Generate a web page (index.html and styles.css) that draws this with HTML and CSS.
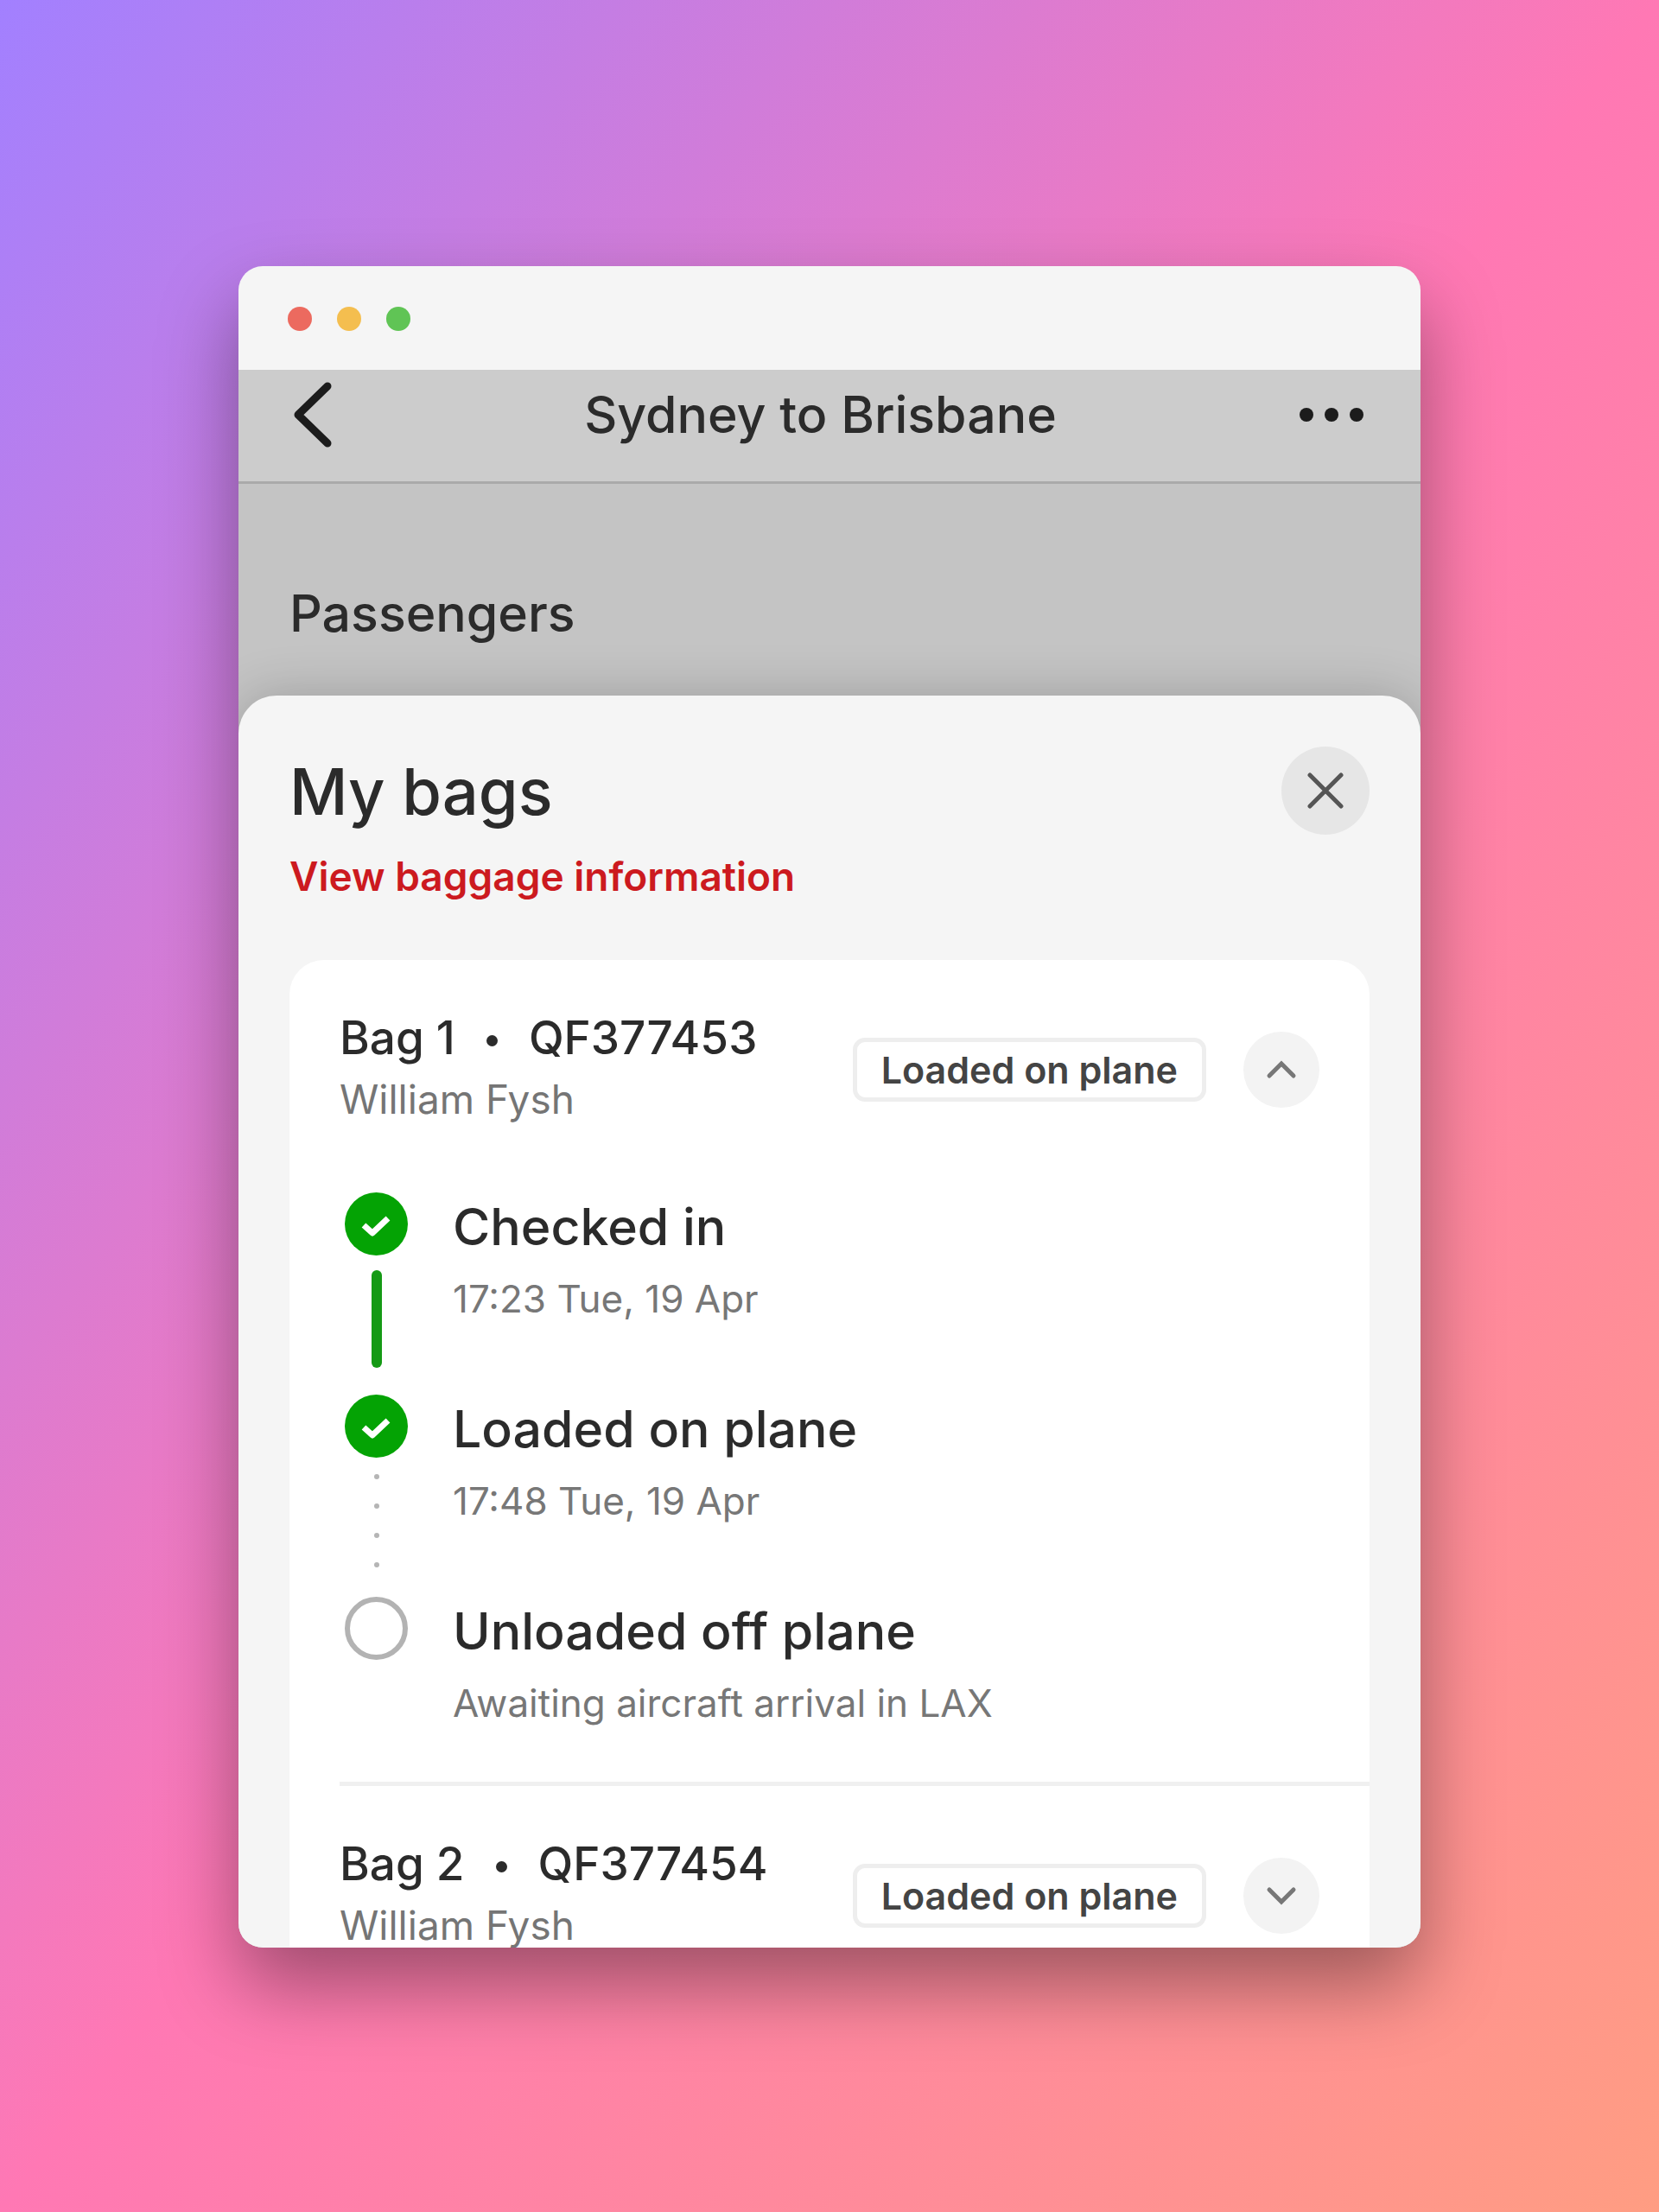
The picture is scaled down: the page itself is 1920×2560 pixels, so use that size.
FILE: index.html
```html
<!DOCTYPE html>
<html lang="en">
<head>
<meta charset="utf-8">
<meta name="viewport" content="width=device-width, initial-scale=1">
<title>My bags</title>
<link rel="stylesheet" href="styles.css">
</head>
<body>
<main class="window">
  <div class="titlebar">
    <span class="light light-red"></span>
    <span class="light light-yellow"></span>
    <span class="light light-green"></span>
  </div>
  <div class="screen">
    <header class="nav">
      <button class="nav-back" type="button" aria-label="Back">
        <svg width="60" height="80" viewBox="0 0 60 80" fill="none" stroke="#1c1c1c" stroke-width="9" stroke-linecap="round" stroke-linejoin="round"><path d="M44 7 10 40l34 33"/></svg>
      </button>
      <h1 class="nav-title">Sydney to Brisbane</h1>
      <button class="nav-more" type="button" aria-label="More">
        <svg width="74" height="16" viewBox="0 0 74 16" fill="#1c1c1c"><circle cx="8" cy="8" r="8"/><circle cx="37" cy="8" r="8"/><circle cx="66" cy="8" r="8"/></svg>
      </button>
    </header>
    <section class="passengers">
      <h2 class="section-title">Passengers</h2>
    </section>
    <section class="sheet">
      <div class="sheet-head">
        <div class="sheet-heading">
          <h2 class="sheet-title">My bags</h2>
          <a class="sheet-link" href="#">View baggage information</a>
        </div>
        <button class="round close" type="button" aria-label="Close">
          <svg width="44" height="44" viewBox="0 0 44 44" fill="none" stroke="#555" stroke-width="5" stroke-linecap="round"><path d="M4 4l36 36M40 4 4 40"/></svg>
        </button>
      </div>
      <div class="card">
        <article class="bag">
          <div class="bag-head">
            <div class="bag-id">
              <h3 class="bag-title"><span>Bag 1</span><span class="bullet"></span><span>QF377453</span></h3>
              <p class="bag-owner">William Fysh</p>
            </div>
            <div class="bag-actions">
              <span class="tag">Loaded on plane</span>
              <button class="round toggle" type="button" aria-label="Hide details">
                <svg width="36" height="24" viewBox="0 0 36 24" fill="none" stroke="#777" stroke-width="5" stroke-linecap="round"><path d="M4 19 18 5l14 14"/></svg>
              </button>
            </div>
          </div>
          <ol class="steps">
            <li class="step">
              <div class="track">
                <svg width="73" height="73" viewBox="0 0 73 73" fill="none"><circle cx="36.500" cy="36.500" r="36.500" fill="#04a304"/><path d="M22 38l10 9 18-17" stroke="#fff" stroke-width="7" stroke-linejoin="round"/></svg>
                <span class="bar"></span>
              </div>
              <div class="step-text">
                <h4 class="step-title">Checked in</h4>
                <p class="step-note">17:23 Tue, 19 Apr</p>
              </div>
            </li>
            <li class="step">
              <div class="track">
                <svg width="73" height="73" viewBox="0 0 73 73" fill="none"><circle cx="36.500" cy="36.500" r="36.500" fill="#04a304"/><path d="M22 38l10 9 18-17" stroke="#fff" stroke-width="7" stroke-linejoin="round"/></svg>
                <span class="dots"><i></i><i></i><i></i><i></i></span>
              </div>
              <div class="step-text">
                <h4 class="step-title">Loaded on plane</h4>
                <p class="step-note">17:48 Tue, 19 Apr</p>
              </div>
            </li>
            <li class="step">
              <div class="track">
                <span class="ring"></span>
              </div>
              <div class="step-text">
                <h4 class="step-title">Unloaded off plane</h4>
                <p class="step-note">Awaiting aircraft arrival in LAX</p>
              </div>
            </li>
          </ol>
        </article>
        <article class="bag">
          <div class="bag-head">
            <div class="bag-id">
              <h3 class="bag-title"><span>Bag 2</span><span class="bullet"></span><span>QF377454</span></h3>
              <p class="bag-owner">William Fysh</p>
            </div>
            <div class="bag-actions">
              <span class="tag">Loaded on plane</span>
              <button class="round toggle" type="button" aria-label="Show details">
                <svg width="36" height="24" viewBox="0 0 36 24" fill="none" stroke="#777" stroke-width="5" stroke-linecap="round"><path d="M4 5l14 14L32 5"/></svg>
              </button>
            </div>
          </div>
        </article>
      </div>
    </section>
  </div>
</main>
</body>
</html>
```
FILE: styles.css
```css
* { box-sizing: border-box; margin: 0; padding: 0; }

body {
  min-height: 100vh;
  padding: 308px 276px 304px;
  background: linear-gradient(to bottom right, #a280ff 0%, #ff78b4 50%, #ff9d82 100%);
  font-family: Inter, "Liberation Sans", sans-serif;
  color: #2b2b2b;
}

button { border: 0; background: none; font: inherit; cursor: pointer; }
svg { display: block; }
ol { list-style: none; }

.window {
  overflow: hidden;
  border-radius: 28px;
  background: #f5f5f5;
  box-shadow: 0 44px 90px rgba(0, 0, 0, .38);
}

.titlebar {
  display: flex;
  align-items: center;
  gap: 29px;
  height: 120px;
  padding: 2px 57px 0;
}
.light { width: 28px; height: 28px; border-radius: 50%; }
.light-red { background: #ec6a5f; }
.light-yellow { background: #f4be4f; }
.light-green { background: #60c455; }

.screen { background: #c4c4c4; }

.nav {
  display: flex;
  align-items: center;
  justify-content: space-between;
  padding: 12px 66px 37px 59px;
  border-bottom: 3px solid #aaa;
  background: #ccc;
}
.nav-title, .section-title, .step-title {
  font-size: 59px;
  line-height: 72px;
  font-weight: 500;
}

.passengers { padding: 114px 59px 59px; }

.sheet {
  padding: 59px 59px 0;
  border-radius: 44px 44px 0 0;
  background: #f5f5f5;
  box-shadow: 0 0 60px rgba(0, 0, 0, .2);
}
.sheet-head {
  display: flex;
  align-items: flex-start;
  justify-content: space-between;
  padding-bottom: 69px;
}
.sheet-heading {
  display: flex;
  flex-direction: column;
  gap: 23px;
  padding-top: 5px;
}
.sheet-title { font-size: 74px; line-height: 94px; font-weight: 500; }
.sheet-link {
  color: #cc1a1f;
  font-size: 46px;
  line-height: 56px;
  font-weight: 600;
  text-decoration: none;
}

.round {
  display: flex;
  align-items: center;
  justify-content: center;
  flex: none;
  border-radius: 50%;
}
.close { width: 102px; height: 102px; background: #e6e6e6; }
.toggle { width: 88px; height: 88px; background: #f3f3f3; }

.card {
  padding-left: 58px;
  border-radius: 40px 40px 0 0;
  background: #fff;
}
.bag { padding-top: 58px; }
.bag + .bag { border-top: 5px solid #f0f0f0; }

.bag-head {
  display: flex;
  align-items: center;
  justify-content: space-between;
  padding-right: 58px;
}
.bag-id { display: flex; flex-direction: column; gap: 13px; }
.bag-title {
  display: flex;
  align-items: center;
  font-size: 53px;
  line-height: 64px;
  font-weight: 500;
}
.bullet {
  width: 13px;
  height: 13px;
  margin: 6px 36px 0;
  border-radius: 50%;
  background: #2b2b2b;
}
.bag-owner { color: #757575; font-size: 46px; line-height: 52px; }
.bag-actions {
  display: flex;
  align-items: center;
  gap: 43px;
  padding-top: 9px;
}
.tag {
  padding: 7px 28px;
  border: 5px solid #eee;
  border-radius: 14px;
  color: #444;
  font-size: 43px;
  line-height: 50px;
  font-weight: 600;
  white-space: nowrap;
}

.steps { padding: 82px 58px 64px 6px; }
.step { display: flex; gap: 52px; }
.track { display: flex; flex-direction: column; align-items: center; flex: none; width: 73px; }
.bar {
  width: 12px;
  height: 113px;
  margin: 17px 0 31px;
  border-radius: 6px;
  background: #159a15;
}
.dots {
  display: flex;
  flex-direction: column;
  justify-content: space-between;
  height: 108px;
  margin: 19px 0 34px;
}
.dots i { width: 6px; height: 6px; border-radius: 50%; background: #b5b5b5; }
.ring { width: 73px; height: 73px; border: 6px solid #b3b3b3; border-radius: 50%; }
.step-text { padding-top: 4px; }
.step-note { margin-top: 21px; color: #777; font-size: 44px; line-height: 53px; }
```
